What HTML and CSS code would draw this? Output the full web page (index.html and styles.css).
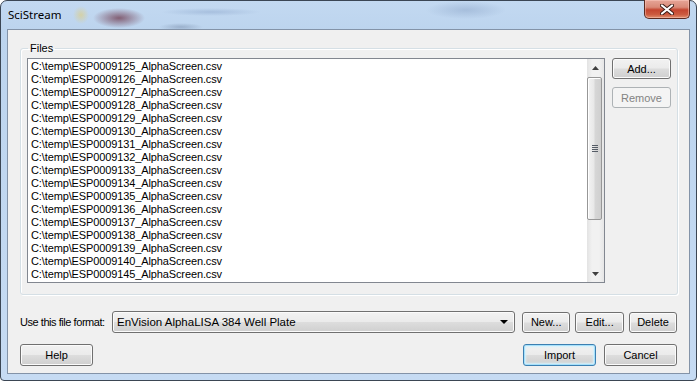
FILE: index.html
```html
<!DOCTYPE html>
<html>
<head>
<meta charset="utf-8">
<link rel="stylesheet" href="styles.css">
</head>
<body>
<div class="window">
  <div class="titlebar">
    <span class="title">SciStream</span>
    <button class="close" aria-label="Close">
      <svg width="14" height="11" viewBox="0 0 14 11">
        <path d="M2 1.5 L12 9.5 M12 1.5 L2 9.5" stroke="#3a1a14" stroke-width="4" stroke-linecap="round"/>
        <path d="M2 1.5 L12 9.5 M12 1.5 L2 9.5" stroke="#ffffff" stroke-width="2.2" stroke-linecap="round"/>
      </svg>
    </button>
  </div>
  <div class="client">
    <fieldset class="group">
      <legend class="legend">Files</legend>
      <div class="files-body">
        <div class="listbox">
          <ul class="items">
            <li>C:\temp\ESP0009125_AlphaScreen.csv</li>
            <li>C:\temp\ESP0009126_AlphaScreen.csv</li>
            <li>C:\temp\ESP0009127_AlphaScreen.csv</li>
            <li>C:\temp\ESP0009128_AlphaScreen.csv</li>
            <li>C:\temp\ESP0009129_AlphaScreen.csv</li>
            <li>C:\temp\ESP0009130_AlphaScreen.csv</li>
            <li>C:\temp\ESP0009131_AlphaScreen.csv</li>
            <li>C:\temp\ESP0009132_AlphaScreen.csv</li>
            <li>C:\temp\ESP0009133_AlphaScreen.csv</li>
            <li>C:\temp\ESP0009134_AlphaScreen.csv</li>
            <li>C:\temp\ESP0009135_AlphaScreen.csv</li>
            <li>C:\temp\ESP0009136_AlphaScreen.csv</li>
            <li>C:\temp\ESP0009137_AlphaScreen.csv</li>
            <li>C:\temp\ESP0009138_AlphaScreen.csv</li>
            <li>C:\temp\ESP0009139_AlphaScreen.csv</li>
            <li>C:\temp\ESP0009140_AlphaScreen.csv</li>
            <li>C:\temp\ESP0009145_AlphaScreen.csv</li>
          </ul>
          <div class="scrollbar">
            <div class="sb-arrow">
              <svg width="7" height="4" viewBox="0 0 7 4"><path d="M0 4 L3.5 0 L7 4 Z" fill="#404040"/></svg>
            </div>
            <div class="sb-track">
              <div class="sb-thumb">
                <div class="grip"><span></span><span></span><span></span><span></span></div>
              </div>
            </div>
            <div class="sb-arrow">
              <svg width="7" height="4" viewBox="0 0 7 4"><path d="M0 0 L7 0 L3.5 4 Z" fill="#404040"/></svg>
            </div>
          </div>
        </div>
        <div class="side-buttons">
          <button class="btn side">Add...</button>
          <button class="btn side" disabled>Remove</button>
        </div>
      </div>
    </fieldset>

    <div class="format-row">
      <span class="label">Use this file format:</span>
      <div class="combo">
        <span class="combo-text">EnVision AlphaLISA 384 Well Plate</span>
        <svg width="8" height="4" viewBox="0 0 8 4"><path d="M0 0 L8 0 L4 4 Z" fill="#000"/></svg>
      </div>
      <button class="btn new">New...</button>
      <button class="btn edit">Edit...</button>
      <button class="btn del">Delete</button>
    </div>

    <div class="bottom-row">
      <button class="btn wide">Help</button>
      <div class="spacer"></div>
      <button class="btn wide default">Import</button>
      <button class="btn wide">Cancel</button>
    </div>
  </div>
</div>
</body>
</html>
```

FILE: styles.css
```css
* { box-sizing: border-box; }

html, body {
  margin: 0;
  padding: 0;
  width: 697px;
  height: 381px;
  overflow: hidden;
  background: #ffffff;
}

.window {
  width: 697px;
  height: 381px;
  border: 1px solid #3b4654;
  border-radius: 7px 7px 4px 4px;
  padding: 0 6px 6px 6px;
  display: flex;
  flex-direction: column;
  background:
    radial-gradient(ellipse 26px 10px at 118px 17px, rgba(110, 55, 75, 0.75), rgba(110, 55, 75, 0) 100%),
    radial-gradient(ellipse 8px 9px at 80px 14px, rgba(225, 205, 120, 0.6), rgba(225, 205, 120, 0) 100%),
    radial-gradient(ellipse 50px 4px at 210px 11px, rgba(150, 175, 210, 0.6), rgba(150, 175, 210, 0) 100%),
    radial-gradient(ellipse 40px 9px at 465px 9px, rgba(140, 165, 200, 0.5), rgba(140, 165, 200, 0) 100%),
    radial-gradient(ellipse 22px 4px at 180px 26px, rgba(120, 140, 170, 0.5), rgba(120, 140, 170, 0) 100%),
    linear-gradient(180deg, #c3d9f1 0%, #bcd4ee 30px, #c6dbf3 100%);
}

.titlebar {
  height: 28px;
  display: flex;
  align-items: flex-start;
  justify-content: space-between;
}

.title {
  font-family: "Noto Sans", "Open Sans", sans-serif;
  font-size: 11.5px;
  color: #000;
  margin: 7px 0 0 1px;
  line-height: 14px;
}

.close {
  width: 46px;
  height: 19px;
  margin: -1px 0 0 0;
  padding: 0;
  border: 1px solid #5b2a20;
  border-top: 0;
  border-radius: 0 0 5px 5px;
  background: linear-gradient(180deg, #e6a597 0%, #d98a78 40%, #c4452f 55%, #cc5a3f 80%, #e08f6e 100%);
  box-shadow: inset 0 0 0 1px rgba(255, 210, 200, 0.45);
  display: flex;
  align-items: center;
  justify-content: center;
}

.client {
  flex: 1;
  background: #f0f0f0;
  border: 1px solid #8393a8;
  padding: 12px 12px 0 12px;
  display: flex;
  flex-direction: column;
  font-family: "Liberation Sans", Arial, sans-serif;
  font-size: 11px;
  color: #000;
}

.group {
  margin: 0;
  padding: 3px 6px 11px 6px;
  height: 253px;
  border: 1px solid #d5dfe5;
  border-radius: 3px;
  box-shadow: inset 1px 1px 0 #ffffff, 1px 1px 0 #ffffff;
}

.legend {
  padding: 0 2px;
  margin-left: 1px;
  line-height: 13px;
  font-size: 11px;
}

.files-body {
  display: flex;
  align-items: flex-start;
  gap: 7px;
}

.listbox {
  width: 578px;
  height: 225px;
  border: 1px solid #828790;
  background: #ffffff;
  display: flex;
}

.items {
  list-style: none;
  margin: 0;
  padding: 1px 0 0 3px;
  flex: 1;
  overflow: hidden;
}

.items li {
  height: 13px;
  line-height: 13px;
  white-space: nowrap;
  letter-spacing: -0.12px;
}

.scrollbar {
  width: 17px;
  display: flex;
  flex-direction: column;
  background: linear-gradient(90deg, #e3e3e3 0%, #f1f1f1 30%, #f1f1f1 70%, #e6e6e6 100%);
}

.sb-arrow {
  height: 17px;
  display: flex;
  align-items: center;
  justify-content: center;
}

.sb-track {
  flex: 1;
  padding: 1px 2px 0 0;
}

.sb-thumb {
  height: 143px;
  width: 15px;
  border: 1px solid #979797;
  border-radius: 2px;
  background: linear-gradient(90deg, #f3f3f3 0%, #e8e8e8 45%, #d6d6d6 55%, #cfcfcf 100%);
  box-shadow: inset 1px 1px 0 #ffffff;
  display: flex;
  align-items: center;
  justify-content: center;
}

.grip {
  display: flex;
  flex-direction: column;
  gap: 1px;
}

.grip span {
  display: block;
  width: 6px;
  height: 1px;
  background: #555c66;
}

.side-buttons {
  display: flex;
  flex-direction: column;
  gap: 8px;
}

.btn {
  height: 21px;
  padding: 0;
  border: 1px solid #707070;
  border-radius: 3px;
  background: linear-gradient(180deg, #f2f2f2 0%, #ebebeb 48%, #dddddd 52%, #cfcfcf 100%);
  box-shadow: inset 0 0 0 1px #fbfbfb;
  font-family: "Liberation Sans", Arial, sans-serif;
  font-size: 11px;
  color: #000;
  line-height: 18px;
}

.btn:disabled {
  border-color: #adb2b5;
  background: #f4f4f4;
  box-shadow: none;
  color: #838383;
}

.side { width: 59px; }

.format-row {
  margin-top: 16px;
  display: flex;
  align-items: center;
  height: 22px;
}

.label {
  width: 92px;
  flex: none;
  white-space: nowrap;
  letter-spacing: -0.45px;
}

.combo {
  width: 404px;
  height: 22px;
  border: 1px solid #707070;
  border-radius: 3px;
  background: linear-gradient(180deg, #f2f2f2 0%, #ebebeb 48%, #dddddd 52%, #cfcfcf 100%);
  box-shadow: inset 0 0 0 1px #fbfbfb;
  display: flex;
  align-items: center;
  justify-content: space-between;
  padding: 0 6px 0 4px;
  font-size: 11.5px;
}

.new { width: 48px; margin-left: 7px; }
.edit { width: 49px; margin-left: 5px; }
.del { width: 48px; margin-left: 5px; }

.bottom-row {
  margin-top: 11px;
  display: flex;
  align-items: center;
}

.wide { width: 73px; height: 22px; }

.spacer { flex: 1; }

.default {
  margin-right: 8px;
  border-color: #3c7fb1;
  box-shadow: inset 0 0 0 1px #a6e1fb, inset 0 0 2px 2px #d6f1fc;
}
```
